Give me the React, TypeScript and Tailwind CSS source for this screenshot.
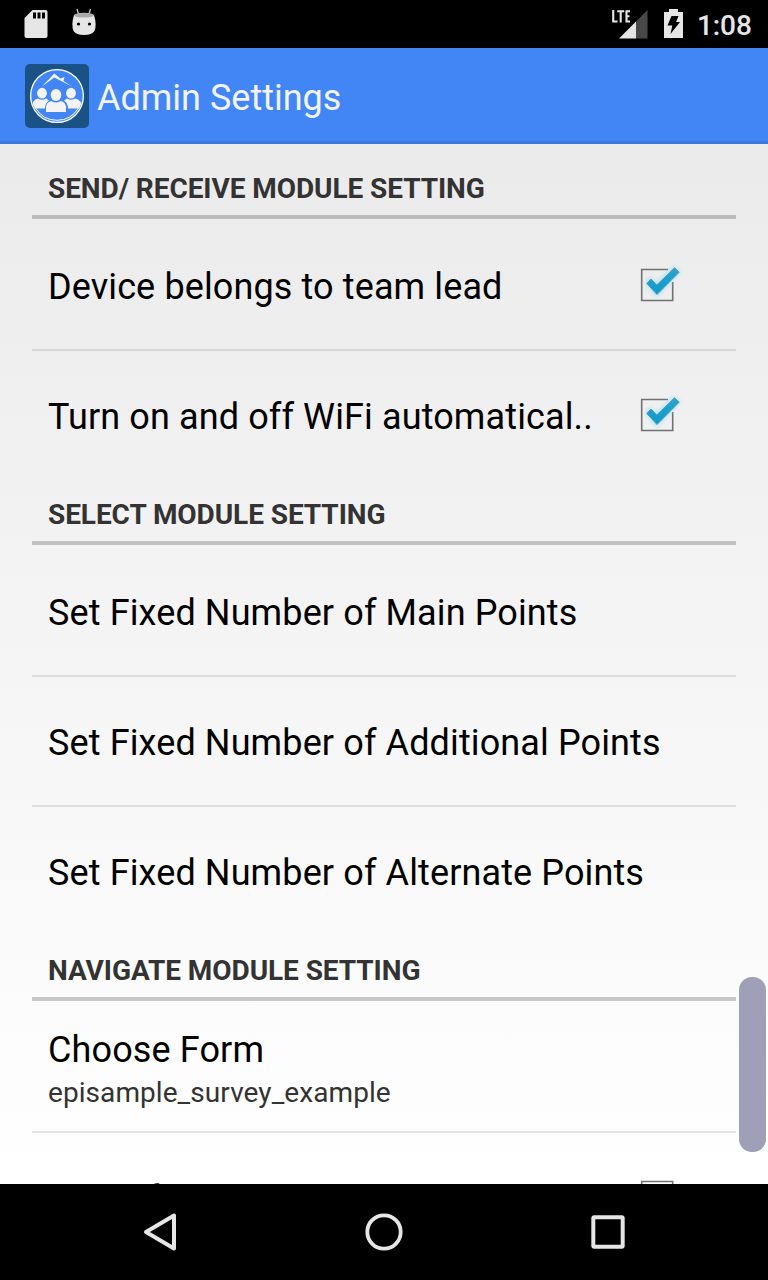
import type { ReactNode } from "react";

function SectionHeader({ title }: { title: string }) {
  return (
    <div className="flex h-16 shrink-0 items-start border-b-4 border-black/20 px-4 pt-[17px]">
      <span className="whitespace-nowrap text-[28px] leading-[33px] font-bold tracking-[-0.07px] text-[#333]">{title}</span>
    </div>
  );
}

function Divider({ hidden = false }: { hidden?: boolean }) {
  return <div className={hidden ? "h-0.5 shrink-0" : "h-0.5 shrink-0 bg-black/10"} />;
}

function Row({ children }: { children: ReactNode }) {
  return <div className="flex h-32 shrink-0 items-center justify-between pl-4 pr-[51px]">{children}</div>;
}

function Label({ children }: { children: ReactNode }) {
  return <span className="whitespace-nowrap pt-1 text-[36px] leading-[42px] tracking-[0.12px] text-black">{children}</span>;
}

function CheckBox({ checked }: { checked: boolean }) {
  return (
    <svg className="size-[48px] shrink-0" viewBox="0 0 48 48" fill="none">
      <defs>
        <linearGradient id="tick" x1="0" y1="0" x2="0" y2="1">
          <stop offset="0" stopColor="#2ba3cf" />
          <stop offset="1" stopColor="#0a9bce" />
        </linearGradient>
        <filter id="glow" x="-30%" y="-30%" width="160%" height="160%">
          <feGaussianBlur stdDeviation="2.2" />
        </filter>
      </defs>
      {checked ? (
        <>
          <path d="M31 8.5H4.7V39.5H35.7V21" stroke="#717171" strokeWidth="1.6" />
          <path d="M8 21L13 16L19.5 22L37 5L43 11L19.5 36Z" fill="#8edcf8" opacity="0.7" filter="url(#glow)" />
          <path d="M9.8 22.5L14 18L19.8 24L37.5 6.8L42.2 11.2L20 33.5Z" fill="url(#tick)" stroke="#5a9db5" strokeWidth="1" strokeLinejoin="round" />
        </>
      ) : (
        <path d="M4.7 8.5H35.7V39.5H4.7Z" stroke="#717171" strokeWidth="1.6" />
      )}
    </svg>
  );
}

function StatusBar() {
  return (
    <div className="flex h-12 shrink-0 items-center bg-black text-[#e6e6e6]">
      <svg className="h-12 w-[120px]" viewBox="0 0 120 48">
        <path d="M32.5 10H45.5Q47.5 10 47.5 12V36Q47.5 38 45.5 38H26.5Q24.5 38 24.5 36V18Z" fill="#e6e6e6" />
        <path d="M33 12.5h3v6h-3zM37.5 12.5h3v6h-3zM42 12.5h3v6h-3z" fill="#000" />
        <path d="M78.5 14L77 9M89 14L90.5 9" stroke="#ccc" strokeWidth="1.3" />
        <path d="M74 15Q84 11 94 15Q97 25 94.5 31Q92 35 84 35Q76 35 73.5 31Q71 25 74 15Z" fill="#e6e6e6" />
        <ellipse cx="84" cy="15.2" rx="9.8" ry="2.4" fill="#aaa" />
        <circle cx="78.5" cy="24" r="1.6" fill="#000" />
        <circle cx="89.5" cy="24" r="1.6" fill="#000" />
      </svg>
      <svg className="ml-auto h-12 w-[91px]" viewBox="606 0 91 48">
        <path d="M636 21.5V38.5H619Z" fill="#e6e6e6" />
        <path d="M636 21.5L647.5 10V38.5H636Z" fill="#484848" />
        <path d="M613.2 10V21.5H617.5M617.2 11.2H624.2M620.7 11.2V22.5M630 11.2H626.5V21.5H630M626.5 16.2H629.5" stroke="#e6e6e6" strokeWidth="2.1" fill="none" />
        <path d="M664 12H669V9H678V12H683V38H664Z" fill="#e6e6e6" />
        <path d="M671.5 16H678.5L676 22H680L670.5 34L672.3 25.5H667.5Z" fill="#000" />
      </svg>
      <span className="w-[71px] whitespace-nowrap pt-[3px] text-[28px] leading-8 font-medium tracking-[-0.1px]">1:08</span>
    </div>
  );
}

function AppIcon() {
  return (
    <svg className="size-16 shrink-0" viewBox="0 0 64 64">
      <defs>
        <clipPath id="disc">
          <circle cx="32" cy="32" r="25.5" />
        </clipPath>
      </defs>
      <rect width="64" height="64" rx="5" fill="#1a5285" />
      <circle cx="32" cy="32" r="26.4" fill="#4286f5" stroke="#fff" strokeWidth="1.3" />
      <path d="M10.5 44Q18 56.3 32 56.3Q46 56.3 53.5 44" fill="none" stroke="#fff" strokeWidth="1" />
      <path d="M17 22.5L29.3 9.5L35.5 14.5L39.5 13L38.5 17L47 22.5L29.3 13.5Z" fill="#f3f3f3" />
      <g fill="#f3f3f3" clipPath="url(#disc)">
        <ellipse cx="17" cy="29.2" rx="4.9" ry="5.4" />
        <path d="M7 44.5Q7 35.5 13 34.5Q17 37 21 34.5L24 36.5Q20 39 20 44.5Z" />
        <ellipse cx="46" cy="29.2" rx="4.9" ry="5.4" />
        <path d="M57 44.5Q57 35.5 50 34.5Q46 37 42 34.5L39 36.5Q43 39 43 44.5Z" />
      </g>
      <ellipse cx="31" cy="31" rx="6.2" ry="6.9" fill="#4286f5" />
      <ellipse cx="31" cy="31" rx="5.3" ry="6" fill="#f3f3f3" />
      <path d="M21 48V43Q21.5 38 26.5 37Q31 40 35.5 37Q40.5 38 41 43V48Z" fill="#f3f3f3" />
    </svg>
  );
}

function NavBar() {
  return (
    <div className="flex h-24 shrink-0 items-center justify-center gap-44 bg-black">
      <svg className="size-12" viewBox="0 0 48 48" fill="none" stroke="#e6e6e6" strokeWidth="4" strokeLinejoin="round">
        <path d="M38 7.5V40.5L10 24Z" />
      </svg>
      <svg className="size-12" viewBox="0 0 48 48" fill="none" stroke="#e6e6e6" strokeWidth="3.8">
        <circle cx="24" cy="24" r="16.7" />
      </svg>
      <svg className="size-12" viewBox="0 0 48 48" fill="none" stroke="#e6e6e6" strokeWidth="4">
        <rect x="9.3" y="9.3" width="29.4" height="29.4" rx="1" />
      </svg>
    </div>
  );
}

export default function App() {
  return (
    <div className="flex h-[1280px] w-[768px] flex-col overflow-hidden bg-linear-to-b from-[#e8e8e8] from-0% to-white to-[92.5%] font-['Roboto',sans-serif]">
      <StatusBar />
      <header className="flex h-24 shrink-0 items-center border-b-[3px] border-[#3b78dc] bg-[#4286f5] pl-[25px] pt-[3px]">
        <AppIcon />
        <h1 className="ml-2 whitespace-nowrap pt-1 text-[36px] leading-[42px] text-[#f3f3f3]">Admin Settings</h1>
      </header>
      <main className="relative flex min-h-0 flex-1 flex-col overflow-hidden px-8 pt-[11px]">
        <SectionHeader title="SEND/ RECEIVE MODULE SETTING" />
        <Divider hidden />
        <Row>
          <Label>Device belongs to team lead</Label>
          <CheckBox checked />
        </Row>
        <Divider />
        <Row>
          <Label>Turn on and off WiFi automatical..</Label>
          <CheckBox checked />
        </Row>
        <Divider hidden />
        <SectionHeader title="SELECT MODULE SETTING" />
        <Divider hidden />
        <Row>
          <Label>Set Fixed Number of Main Points</Label>
        </Row>
        <Divider />
        <Row>
          <Label>Set Fixed Number of Additional Points</Label>
        </Row>
        <Divider />
        <Row>
          <Label>Set Fixed Number of Alternate Points</Label>
        </Row>
        <Divider hidden />
        <SectionHeader title="NAVIGATE MODULE SETTING" />
        <Divider hidden />
        <Row>
          <div className="flex flex-col gap-[5px]">
            <Label>Choose Form</Label>
            <span className="whitespace-nowrap text-[28px] leading-[33px] tracking-[0.07px] text-[#333]">episample_survey_example</span>
          </div>
        </Row>
        <Divider />
        <Row>
          <span className="ml-[99px] pt-1 text-[35px] leading-[42px] text-black">f</span>
          <CheckBox checked={false} />
        </Row>
        <div className="absolute top-[833px] right-0.5 h-[175px] w-[27px] rounded-[13px] bg-[#9f9fb8]" />
      </main>
      <NavBar />
    </div>
  );
}
